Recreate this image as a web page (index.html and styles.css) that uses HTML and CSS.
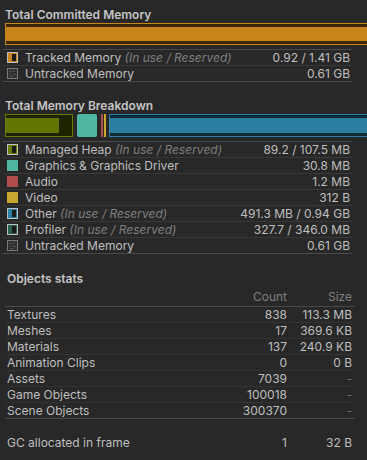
FILE: index.html
```html
<!DOCTYPE html>
<html>
<head>
	<meta charset="UTF-8">
	<title>Memory Summary</title>
	<link rel="stylesheet" href="styles.css">
</head>
<body>
	<div class="title">Total Committed Memory</div>
	<div class="bar">
		<div class="seg seg-tracked"><div class="fill" style="width: 100%;"></div></div>
	</div>
	<div class="list">
		<div class="row">
			<span class="icon split ic-tracked"><i></i></span>
			<span class="name">Tracked Memory <em>(In use / Reserved)</em></span>
			<span class="val">0.92 / 1.41 GB</span>
		</div>
		<div class="row">
			<span class="icon">
				<svg width="11" height="11" viewBox="0 0 11 11"><rect x="0.5" y="0.5" width="10" height="10" fill="#2e2e2e" stroke="#7a7a7a"/><path d="M2 3.5h2M5 3h3M2.5 6h1.5M6 6.5h2.5M3 8.5h3" stroke="#5c5c5c" stroke-width="1"/></svg>
			</span>
			<span class="name">Untracked Memory</span>
			<span class="val">0.61 GB</span>
		</div>
	</div>

	<div class="title second">Total Memory Breakdown</div>
	<div class="bar tall">
		<div class="seg seg-heap"><div class="fill" style="width: 81%;"></div></div>
		<div class="seg seg-gfx"></div>
		<div class="seg seg-audio"></div>
		<div class="seg seg-video"></div>
		<div class="seg seg-other"><div class="fill" style="width: 100%;"></div></div>
	</div>
	<div class="list">
		<div class="row">
			<span class="icon split ic-heap"><i></i></span>
			<span class="name">Managed Heap <em>(In use / Reserved)</em></span>
			<span class="val">89.2 / 107.5 MB</span>
		</div>
		<div class="row">
			<span class="icon solid ic-gfx"></span>
			<span class="name">Graphics &amp; Graphics Driver</span>
			<span class="val">30.8 MB</span>
		</div>
		<div class="row">
			<span class="icon solid ic-audio"></span>
			<span class="name">Audio</span>
			<span class="val">1.2 MB</span>
		</div>
		<div class="row">
			<span class="icon solid ic-video"></span>
			<span class="name">Video</span>
			<span class="val">312 B</span>
		</div>
		<div class="row">
			<span class="icon split ic-other"><i></i></span>
			<span class="name">Other <em>(In use / Reserved)</em></span>
			<span class="val">491.3 MB / 0.94 GB</span>
		</div>
		<div class="row">
			<span class="icon split ic-profiler"><i></i></span>
			<span class="name">Profiler <em>(In use / Reserved)</em></span>
			<span class="val">327.7 / 346.0 MB</span>
		</div>
		<div class="row">
			<span class="icon">
				<svg width="11" height="11" viewBox="0 0 11 11"><rect x="0.5" y="0.5" width="10" height="10" fill="#2e2e2e" stroke="#7a7a7a"/><path d="M2 3.5h2M5 3h3M2.5 6h1.5M6 6.5h2.5M3 8.5h3" stroke="#5c5c5c" stroke-width="1"/></svg>
			</span>
			<span class="name">Untracked Memory</span>
			<span class="val">0.61 GB</span>
		</div>
	</div>

	<div class="title third">Objects stats</div>
	<div class="stats">
		<div class="srow head"><span class="sname"></span><span class="count">Count</span><span class="size">Size</span></div>
		<div class="srow"><span class="sname">Textures</span><span class="count">838</span><span class="size">113.3 MB</span></div>
		<div class="srow"><span class="sname">Meshes</span><span class="count">17</span><span class="size">369.6 KB</span></div>
		<div class="srow"><span class="sname">Materials</span><span class="count">137</span><span class="size">240.9 KB</span></div>
		<div class="srow"><span class="sname">Animation Clips</span><span class="count">0</span><span class="size">0 B</span></div>
		<div class="srow"><span class="sname">Assets</span><span class="count">7039</span><span class="size dim">-</span></div>
		<div class="srow"><span class="sname">Game Objects</span><span class="count">100018</span><span class="size dim">-</span></div>
		<div class="srow last"><span class="sname">Scene Objects</span><span class="count">300370</span><span class="size dim">-</span></div>
		<div class="srow gc"><span class="sname">GC allocated in frame</span><span class="count">1</span><span class="size">32 B</span></div>
	</div>
</body>
</html>
```

FILE: styles.css
```css
body {
  margin: 0;
  background-color: #282828;
  color: #bfbfbf;
  font-family: Inter, "Noto Sans", sans-serif;
  font-size: 12px;
}

.title {
  margin: 7px 0 0 5px;
  height: 16px;
  line-height: 16px;
  font-weight: 600;
  color: #c4c4c4;
}

.title.second {
  margin-top: 16px;
}

.title.third {
  margin-top: 17px;
  margin-left: 7px;
}

.bar {
  display: flex;
  gap: 4px;
  margin-left: 5px;
  height: 22px;
}

.bar.tall {
  height: 23px;
}

.seg {
  box-sizing: border-box;
  height: 100%;
}

.seg .fill {
  height: 100%;
}

.seg-tracked {
  flex: 1;
  border: 1px solid #c8841a;
  border-right: none;
  background-color: #3b2707;
  padding: 3px 0;
}

.seg-tracked .fill {
  background-color: #c8841a;
}

.seg-heap {
  width: 68px;
  border: 1px solid #6a7d00;
  background-color: #1d2500;
  padding: 3px 0;
}

.seg-heap .fill {
  background-color: #627500;
}

.seg-gfx {
  width: 20px;
  background-color: #4fb7a1;
  border-radius: 2px;
}

.seg-audio {
  width: 2px;
  background-color: #b04d4d;
}

.seg-video {
  width: 2px;
  margin-left: -3px;
  background-color: #c9a82f;
}

.seg-other {
  flex: 1;
  margin-left: -1px;
  border: 1px solid #2a80a3;
  border-right: none;
  background-color: #0e2a36;
  padding: 3px 0;
}

.seg-other .fill {
  background-color: #2a7fa1;
}

.list {
  margin: 4px 15px 0 3px;
  border-top: 1px solid #4a4a4a;
}

.row {
  display: flex;
  align-items: center;
  height: 15px;
  border-bottom: 1px solid #383838;
  padding: 0 2px 0 4px;
}

.row:last-child {
  border-bottom-color: #4a4a4a;
}

.icon {
  width: 11px;
  height: 11px;
  margin-right: 7px;
  box-sizing: border-box;
  flex: none;
  display: flex;
}

.icon.split {
  border: 1px solid;
  padding: 1px 1px 1px 4px;
}

.icon.split i {
  flex: 1;
  background-color: #1a1a1a;
}

.ic-tracked {
  border-color: #c8841a;
  background-color: #c8841a;
}

.ic-heap {
  border-color: #6a7d00;
  background-color: #6a7d00;
}

.ic-other {
  border-color: #2a80a3;
  background-color: #2a80a3;
}

.ic-profiler {
  border-color: #2a5e4e;
  background-color: #2a5e4e;
}

.ic-gfx {
  background-color: #4fb7a1;
}

.ic-audio {
  background-color: #b04d4d;
}

.ic-video {
  background-color: #c9a82f;
}

.name {
  flex: 1;
  white-space: nowrap;
}

.name em {
  color: #7f7f7f;
}

.val {
  white-space: nowrap;
}

.stats {
  margin: 0 12px 0 5px;
}

.srow {
  display: flex;
  height: 15px;
  line-height: 15px;
  border-bottom: 1px solid #333333;
  padding: 0 3px 0 2px;
}

.srow.head {
  height: 19px;
  line-height: 19px;
  color: #7f7f7f;
  border-bottom-color: #4a4a4a;
}

.srow.last {
  border-bottom: 1px solid #4a4a4a;
}

.srow.gc {
  border-bottom: none;
  margin-top: 16px;
}

.sname {
  flex: 1;
}

.count {
  width: 80px;
  text-align: right;
}

.size {
  width: 65px;
  text-align: right;
}

.dim {
  color: #6a6a6a;
}
```
